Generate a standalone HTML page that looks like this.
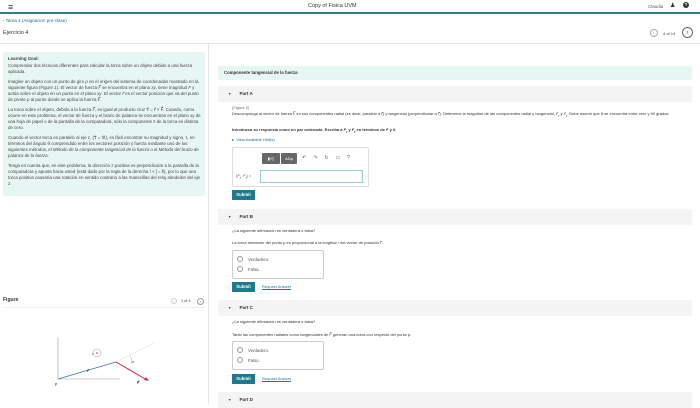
<!DOCTYPE html>
<html><head><meta charset="utf-8"><style>
*{margin:0;padding:0;box-sizing:border-box}
body{width:700px;height:404px;overflow:hidden;background:#fff;font-family:"Liberation Sans",sans-serif;color:#333;position:relative}
.a{position:absolute;white-space:nowrap}
.t{font-size:4.3px;line-height:6px}
.ph{position:absolute;left:218px;width:474px;height:16px;background:#f4f4f4;font-size:4.6px;font-weight:bold;line-height:16px;padding-left:10px}
.ph:before{content:"▼";font-size:3.5px;margin-right:8px;color:#444}
.btn{position:absolute;background:#1d7a8c;color:#fff;font-size:4.3px;font-weight:bold;width:23px;height:10px;line-height:10px;text-align:center}
.ra{position:absolute;left:232px;width:92px;height:29px;border:1px solid #ccc;border-radius:2px}
.rd{position:absolute;left:4px;font-size:4.3px;color:#555}
.rd:before{content:"";display:inline-block;width:4px;height:4px;border:0.6px solid #999;border-radius:50%;margin-right:5px;vertical-align:-1px}
.req{position:absolute;left:262px;font-size:4px;color:#1d7a8c;text-decoration:underline}
.lg div{margin-top:4px}
</style></head><body>
<div class="a" style="left:8px;top:2px;font-size:9px;color:#333">≡</div>
<div class="a" style="left:308px;top:3px;font-size:5.5px">Copy of Fisica UVM</div>
<div class="a" style="left:648px;top:4px;font-size:4.5px;color:#555">Claudia</div>
<div class="a" style="left:670px;top:2px;font-size:6px">&#9823;</div>
<div class="a" style="left:683px;top:2px;width:6px;height:6px;border-radius:50%;background:#333;color:#fff;font-size:4.5px;text-align:center;line-height:6px;font-weight:bold">?</div>
<div class="a" style="left:0;top:12px;width:700px;height:2px;background:#2d7d8c"></div>
<div class="a" style="left:3px;top:18px;font-size:4.5px;color:#1d6a8c">‹ Tarea 4 (Asignacion pre-clase)</div>
<div class="a" style="left:3px;top:30px;font-size:5.5px">Ejercicio 4</div>
<div class="a" style="left:650px;top:29px;width:8px;height:8px;border:0.7px solid #aaa;border-radius:50%;font-size:5px;text-align:center;line-height:7px;color:#999">‹</div>
<div class="a" style="left:663px;top:31px;font-size:4px">4 of 14</div>
<div class="a" style="left:682px;top:27px;width:11px;height:11px;border:0.8px solid #666;border-radius:50%;font-size:6px;text-align:center;line-height:10px">›</div>
<div class="a" style="left:0;top:43px;width:700px;height:1px;background:#e5e5e5"></div>
<div class="a" style="left:208px;top:44px;width:1px;height:360px;background:#e5e5e5"></div>

<div class="a" style="left:3px;top:52px;width:202px;height:144px;background:#e5f6f3"></div>
<div class="a t lg" style="left:8px;top:56px;white-space:normal;width:194px;font-size:4.4px;line-height:6px;color:#444">
<b>Learning Goal:</b><br>
<div style="margin-top:1px">Comprendar dos técnicas diferentes para calcular la torca sobre un objeto debido a una fuerza aplicada.</div>
<div>Imagine un objeto con un punto de giro <i>p</i> en el origen del sistema de coordenadas mostrado en la siguiente figura (Figure 1). El vector de fuerza <i>F⃗</i> se encuentra en el plano <i>xy</i>, tiene magnitud <i>F</i> y actúa sobre el objeto en un punto en el plano <i>xy</i>. El vector <i>r⃗</i> es el vector posición que va del punto de pivote <i>p</i> al punto donde se aplica la fuerza <i>F⃗</i>.</div>
<div>La torca sobre el objeto, debida a la fuerza <i>F⃗</i>, es igual al producto cruz τ⃗ = r⃗ × F⃗. Cuando, como ocurre en este problema, el vector de fuerza y el brazo de palanca se encuentran en el plano xy de una hoja de papel o de la pantalla de la computadora, sólo la componente z de la torca es distinta de cero.</div>
<div>Cuando el vector torca es paralelo al eje z, (τ⃗ = τk̂), es fácil encontrar su magnitud y signo, τ, en términos del ángulo θ comprendido entre los vectores posición y fuerza mediante uno de los siguientes métodos, el <i>Método de la componente tangencial de la fuerza</i> o el <i>Método del brazo de palanca de la fuerza</i>.</div>
<div>Tenga en cuenta que, en este problema, la dirección z positiva es perpendicular a la pantalla de la computadora y apunta hacia usted (está dado por la regla de la derecha î × ĵ = k̂), por lo que una torca positiva causaría una rotación en sentido contrario a las manecillas del reloj alrededor del eje z.</div>
</div>

<div class="a" style="left:3px;top:297px;font-size:5px;font-weight:bold">Figure</div>
<div class="a" style="left:171px;top:298px;width:6px;height:6px;border:0.6px solid #ccc;border-radius:50%;font-size:4px;text-align:center;line-height:5px;color:#bbb">‹</div>
<div class="a" style="left:181px;top:299px;font-size:3.8px">1 of 3</div>
<div class="a" style="left:197px;top:298px;width:7px;height:7px;border:0.6px solid #999;border-radius:50%;font-size:4px;text-align:center;line-height:6px">›</div>
<div class="a" style="left:3px;top:307px;width:202px;height:1px;background:#eee"></div>
<svg class="a" style="left:0;top:300px" width="208" height="104">
<line x1="58" y1="79" x2="58" y2="38" stroke="#999" stroke-width="0.6"/>
<line x1="58" y1="79" x2="120" y2="79" stroke="#999" stroke-width="0.6"/>
<line x1="116" y1="62" x2="154" y2="43" stroke="#ccc" stroke-width="0.6" stroke-dasharray="2,1"/>
<line x1="58" y1="79" x2="116" y2="62" stroke="#3a78a8" stroke-width="0.9"/>
<line x1="116" y1="62" x2="147" y2="80" stroke="#c8284a" stroke-width="1"/>
<polygon points="149,81 144,80 146,77" fill="#c8284a"/>
<circle cx="97" cy="53" r="4" fill="none" stroke="#999" stroke-width="0.5"/>
<circle cx="97" cy="53" r="0.8" fill="#c8284a"/>
<path d="M130 56 Q133 60 131 64" fill="none" stroke="#999" stroke-width="0.4"/>
<text x="55" y="85" font-size="4" font-family="Liberation Serif" font-style="italic">p</text>
<text x="87" y="72" font-size="4" font-family="Liberation Serif" font-style="italic">r⃗</text>
<text x="137" y="84" font-size="4" font-family="Liberation Serif" font-style="italic">F⃗</text>
<text x="132" y="63" font-size="3.5" font-family="Liberation Serif" font-style="italic">θ</text>
<text x="92" y="55" font-size="3" font-family="Liberation Sans">z</text>
</svg>

<div class="a" style="left:218px;top:66px;width:474px;height:14px;background:#e5f6f3;font-size:4.3px;font-weight:bold;line-height:14px;padding-left:6px">Componente tangencial de la fuerza</div>
<div class="ph" style="top:86px">Part A</div>
<div class="a t" style="left:232px;top:105px;font-size:4px;color:#666">(Figure 2)</div>
<div class="a t" style="left:232px;top:111px;white-space:normal;width:460px;font-size:4px;line-height:5.3px">Descomponga al vector de fuerza <i>F⃗</i> en sus componentes radial (es decir, paralelo a <i>r⃗</i>) y tangencial (perpendicular a <i>r⃗</i>). Determine la magnitud de las componentes radial y tangencial, <i>F<sub>r</sub></i> y <i>F<sub>t</sub></i>. Debe asumir que θ se encuentra entre cero y 90 grados.</div>
<div class="a t" style="left:232px;top:127px;font-size:4px;font-weight:bold">Introduzca su respuesta como un par ordenado. Escriba a <i>F<sub>r</sub></i> y <i>F<sub>t</sub></i> en términos de <i>F</i> y <i>θ</i>.</div>
<div class="a t" style="left:232px;top:137px;font-size:4px;color:#1d6a8c">▸&nbsp; View Available Hint(s)</div>
<div class="a" style="left:232px;top:147px;width:137px;height:40px;border:1px solid #ddd;border-radius:2px"></div>
<div class="a" style="left:262px;top:153px;width:18px;height:11px;background:#666;border-radius:1px;color:#fff;font-size:4px;line-height:11px;text-align:center">▮√▯</div>
<div class="a" style="left:281px;top:153px;width:16px;height:11px;background:#666;border-radius:1px;color:#fff;font-size:4px;line-height:11px;text-align:center">ΑΣφ</div>
<div class="a" style="left:302px;top:155px;font-size:5px;color:#555;letter-spacing:7px">↶↷↻▭?</div>
<div class="a" style="left:236px;top:173px;font-size:4px;color:#555">(<i>F<sub>r</sub></i>, <i>F<sub>t</sub></i>) =</div>
<div class="a" style="left:260px;top:170px;width:103px;height:13px;border:0.8px solid #9cc;background:#fff"></div>
<div class="btn" style="left:232px;top:190px">Submit</div>

<div class="ph" style="top:209px">Part B</div>
<div class="a t" style="left:232px;top:228px;font-size:4px">¿La siguiente afirmación es verdadera o falsa?</div>
<div class="a t" style="left:232px;top:240px;font-size:4px">La torca alrededor del punto <i>p</i> es proporcional a la longitud <i>r</i> del vector de posición <i>r⃗</i>.</div>
<div class="ra" style="top:250px"><div class="rd" style="top:5px">Verdadera.</div><div class="rd" style="top:15px">Falsa.</div></div>
<div class="btn" style="left:232px;top:282px">Submit</div>
<div class="req" style="top:284px">Request Answer</div>

<div class="ph" style="top:300px">Part C</div>
<div class="a t" style="left:232px;top:319px;font-size:4px">¿La siguiente afirmación es verdadera o falsa?</div>
<div class="a t" style="left:232px;top:332px;font-size:4px">Tanto las componentes radiales como tangenciales de <i>F⃗</i> generan una torca con respecto del punto <i>p</i>.</div>
<div class="ra" style="top:341px"><div class="rd" style="top:5px">Verdadero.</div><div class="rd" style="top:15px">Falso.</div></div>
<div class="btn" style="left:232px;top:374px">Submit</div>
<div class="req" style="top:376px">Request Answer</div>

<div class="ph" style="top:392px">Part D</div>
</body></html>
